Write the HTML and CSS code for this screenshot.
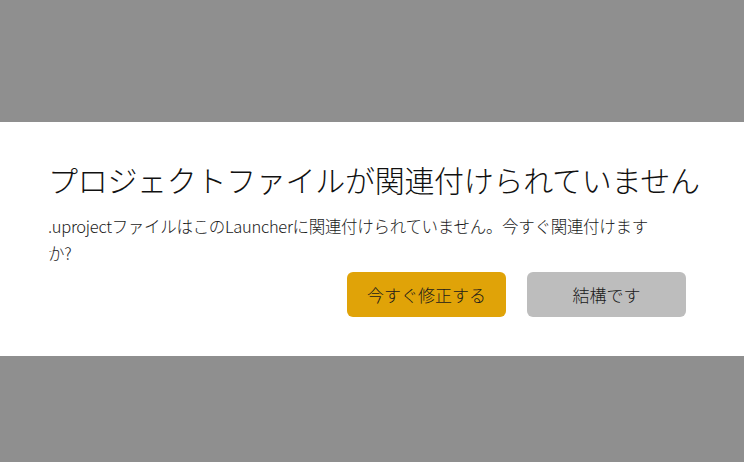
FILE: index.html
```html
<!DOCTYPE html>
<html>
<head>
  <meta charset="utf-8">
  <meta name="viewport" content="width=device-width, initial-scale=1">
  <title>プロジェクトファイル</title>
  <link rel="stylesheet" href="styles.css">
</head>
<body>
  <div class="overlay">
    <div class="dialog">
      <h2 class="title">プロジェクトファイルが関連付けられていません</h2>
      <p class="message">.uprojectファイルはこのLauncherに関連付けられていません。今すぐ関連付けますか?</p>
      <div class="actions">
        <button class="btn primary" type="button">今すぐ修正する</button>
        <button class="btn secondary" type="button">結構です</button>
      </div>
    </div>
  </div>
</body>
</html>
```

FILE: styles.css
```css
*{
  margin: 0;
  padding: 0;
  box-sizing: border-box;
  font-family: "Noto Sans CJK JP", "Noto Sans", sans-serif;
}
body
{
  background: #8f8f8f;
}
.overlay
{
  width: 100%;
  height: 100vh;
  display: flex;
  align-items: center;
  padding-top: 16px;
}
.dialog
{
  width: 100%;
  height: 234px;
  background: #ffffff;
  padding: 36px 48px 0 48px;
}
.title
{
  font-size: 30px;
  font-weight: 300;
  color: #111;
  line-height: 42px;
  white-space: nowrap;
  letter-spacing: -0.3px;
}
.message
{
  margin-top: 13px;
  width: 605px;
  font-size: 16.5px;
  font-weight: 300;
  line-height: 27px;
  letter-spacing: -0.3px;
  color: #1a1a1a;
}
.actions
{
  display: flex;
  justify-content: flex-end;
  gap: 21px;
  margin-top: 5px;
  padding-right: 10px;
}
.btn
{
  width: 159px;
  height: 45px;
  border: none;
  border-radius: 6px;
  font-size: 17px;
  font-weight: 300;
  color: #1a1a1a;
  cursor: pointer;
}
.primary
{
  background: #e0a308;
}
.secondary
{
  background: #bdbdbd;
}
```
